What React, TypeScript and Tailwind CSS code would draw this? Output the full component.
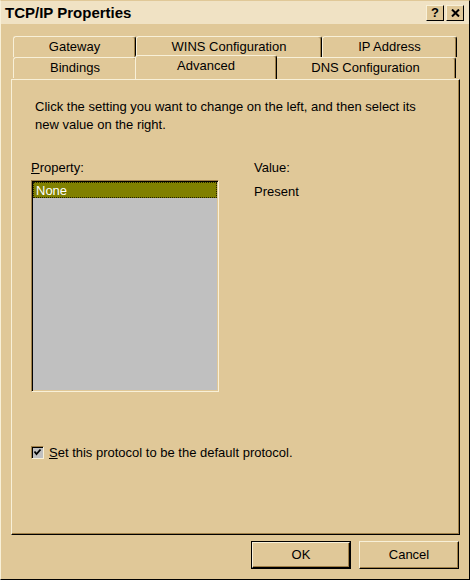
import React from 'react';

const font = { fontFamily: '"Liberation Sans", Arial, sans-serif' };

function Tab({ label, w, active }: { label: string; w: string; active?: boolean }) {
  return (
    <div
      className={`${w} flex items-center justify-center rounded-t-[3px] border-t border-l border-r border-t-[#f8f0d8] border-l-[#f8f0d8] border-r-black shadow-[inset_-1px_0_0_#a08048] ${
        active ? 'h-[24px] -mt-[2px] -mx-[2px] relative z-10 bg-[#e0c898] pb-[4px]' : 'h-[21px] bg-[#e0c898] pb-[1px]'
      }`}
    >
      <span className="text-[13px] text-black leading-none">{label}</span>
    </div>
  );
}

function Btn({ label, def }: { label: string; def?: boolean }) {
  return (
    <div
      className={`w-[100px] h-[28px] flex items-center justify-center ${
        def ? 'border border-black' : ''
      }`}
    >
      <div className="flex-1 self-stretch flex items-center justify-center border-t border-l border-t-[#f8f0d8] border-l-[#f8f0d8] border-r border-b border-r-black border-b-black shadow-[inset_-1px_-1px_0_#a08048]">
        <span className="text-[13px]">{label}</span>
      </div>
    </div>
  );
}

export default function App() {
  return (
    <div style={font} className="w-[470px] h-[580px] bg-[#e0c898] text-black border-t border-l border-t-[#e0c898] border-l-[#f8f0d8] border-r border-b border-r-black border-b-black flex flex-col overflow-hidden">
      <div className="h-[23px] bg-[#f0e2c4] flex items-center pl-[4px] pr-[5px]">
        <span className="text-[15px] font-bold flex-1 leading-none">TCP/IP Properties</span>
        <div className="w-[18px] h-[16px] flex items-center justify-center bg-[#e0c898] border-t border-l border-t-[#f8f0d8] border-l-[#f8f0d8] border-r border-b border-r-black border-b-black text-[13px] font-bold leading-none">?</div>
        <div className="w-[18px] h-[16px] ml-[2px] flex items-center justify-center bg-[#e0c898] border-t border-l border-t-[#f8f0d8] border-l-[#f8f0d8] border-r border-b border-r-black border-b-black">
          <svg width="9" height="8" viewBox="0 0 9 8">
            <path d="M1 0.5 L8 7.5 M8 0.5 L1 7.5" stroke="black" strokeWidth="2" />
          </svg>
        </div>
      </div>

      <div className="mt-[12px] ml-[12px] flex flex-col">
        <div className="flex">
          <Tab label="Gateway" w="w-[123px]" />
          <Tab label="WINS Configuration" w="w-[186px]" />
          <Tab label="IP Address" w="w-[135px]" />
        </div>
        <div className="flex">
          <Tab label="Bindings" w="w-[124px]" />
          <Tab label="Advanced" w="w-[142px]" active />
          <Tab label="DNS Configuration" w="w-[181px]" />
        </div>
      </div>

      <div className="ml-[10px] w-[449px] h-[456px] border-t border-l border-t-[#f8f0d8] border-l-[#f8f0d8] border-r border-b border-r-black border-b-black shadow-[inset_-1px_-1px_0_#a08048] flex flex-col">
        <p className="ml-[23px] mt-[18px] text-[13px] leading-[18px] w-[400px]">
          Click the setting you want to change on the left, and then select its new value on the right.
        </p>
        <div className="flex ml-[19px] mt-[26px]">
          <div className="flex flex-col">
            <span className="text-[13px] leading-[16px]">
              <u>P</u>roperty:
            </span>
            <div className="mt-[4px] w-[188px] h-[212px] border-t border-l border-t-[#a08048] border-l-[#a08048] border-r border-b border-r-[#f8f0d8] border-b-[#f8f0d8] shadow-[inset_1px_1px_0_black,inset_-1px_-1px_0_#e0c898] bg-[#c0c0c0] pt-[1px] pl-[1px] pr-[1px]">
              <div className="h-[16px] bg-[#808000] border border-dotted border-[#202000] flex items-center pl-[2px]">
                <span className="text-[13px] text-white leading-none">None</span>
              </div>
            </div>
          </div>
          <div className="flex flex-col ml-[35px]">
            <span className="text-[13px] leading-[16px]">Value:</span>
            <span className="text-[13px] leading-[16px] mt-[8px]">Present</span>
          </div>
        </div>
        <div className="flex items-center ml-[19px] mt-[54px]">
          <div className="w-[13px] h-[13px] bg-[#c0c0c0] border-t border-l border-t-[#a08048] border-l-[#a08048] border-r border-b border-r-[#f8f0d8] border-b-[#f8f0d8] shadow-[inset_1px_1px_0_black] flex items-center justify-center">
            <svg width="9" height="9" viewBox="0 0 9 9">
              <path d="M1.5 3.5 L3.5 6 L7.5 1.5" stroke="black" strokeWidth="1.8" fill="none" />
            </svg>
          </div>
          <span className="ml-[5px] text-[13px] leading-none">
            <u>S</u>et this protocol to be the default protocol.
          </span>
        </div>
      </div>

      <div className="flex ml-[250px] mt-[6px] gap-[8px]">
        <Btn label="OK" def />
        <Btn label="Cancel" />
      </div>
    </div>
  );
}
